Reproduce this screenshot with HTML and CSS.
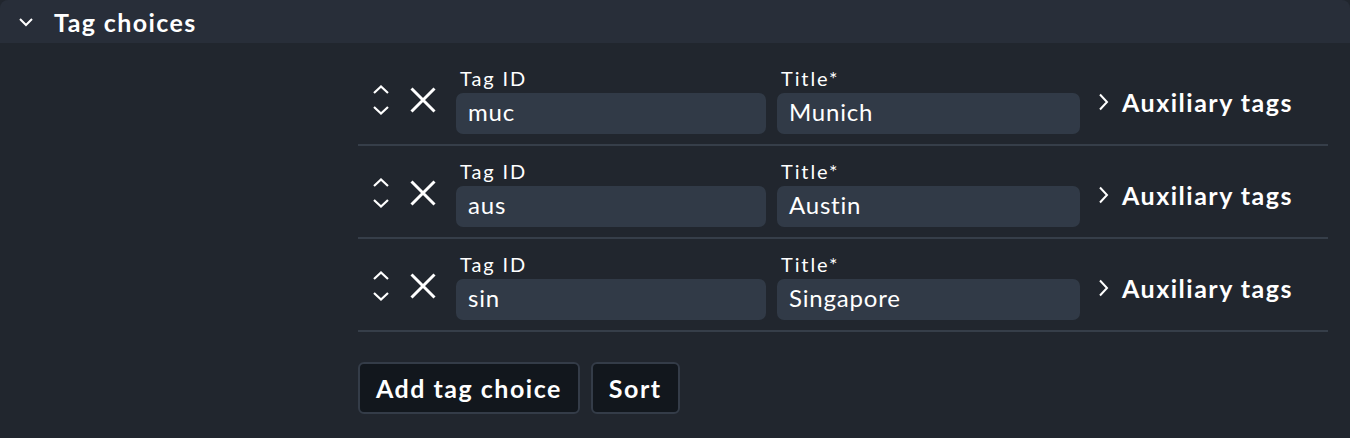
FILE: index.html
```html
<!DOCTYPE html>
<html lang="en">
<head>
    <meta charset="UTF-8">
    <title>Tag choices</title>
    <link rel="stylesheet" href="styles.css">
</head>
<body>
    <div class="section">
        <div class="section-head">
            <svg class="fold" width="16" height="10" viewBox="0 0 16 10"><path d="M2 2 L8 8 L14 2" fill="none" stroke="#fff" stroke-width="2"/></svg>
            <span>Tag choices</span>
        </div>

        <div class="section-body">
            <div class="choices">
                <div class="choice">
                    <div class="controls">
                        <svg class="move" width="18" height="30" viewBox="0 0 18 30"><path d="M2 8 L9 1.5 L16 8 M2 22 L9 28.5 L16 22" fill="none" stroke="#fff" stroke-width="2.2"/></svg>
                        <svg class="del" width="26" height="26" viewBox="0 0 26 26"><path d="M1.5 1.5 L24.5 24.5 M24.5 1.5 L1.5 24.5" fill="none" stroke="#fff" stroke-width="3"/></svg>
                    </div>
                    <div class="field id-field">
                        <label>Tag ID</label>
                        <div class="input">muc</div>
                    </div>
                    <div class="field title-field">
                        <label>Title*</label>
                        <div class="input">Munich</div>
                    </div>
                    <div class="aux">
                        <svg width="12" height="18" viewBox="0 0 12 18"><path d="M2 1.5 L9 9 L2 16.5" fill="none" stroke="#fff" stroke-width="2"/></svg>
                        <span>Auxiliary tags</span>
                    </div>
                </div>

                <div class="choice">
                    <div class="controls">
                        <svg class="move" width="18" height="30" viewBox="0 0 18 30"><path d="M2 8 L9 1.5 L16 8 M2 22 L9 28.5 L16 22" fill="none" stroke="#fff" stroke-width="2.2"/></svg>
                        <svg class="del" width="26" height="26" viewBox="0 0 26 26"><path d="M1.5 1.5 L24.5 24.5 M24.5 1.5 L1.5 24.5" fill="none" stroke="#fff" stroke-width="3"/></svg>
                    </div>
                    <div class="field id-field">
                        <label>Tag ID</label>
                        <div class="input">aus</div>
                    </div>
                    <div class="field title-field">
                        <label>Title*</label>
                        <div class="input">Austin</div>
                    </div>
                    <div class="aux">
                        <svg width="12" height="18" viewBox="0 0 12 18"><path d="M2 1.5 L9 9 L2 16.5" fill="none" stroke="#fff" stroke-width="2"/></svg>
                        <span>Auxiliary tags</span>
                    </div>
                </div>

                <div class="choice">
                    <div class="controls">
                        <svg class="move" width="18" height="30" viewBox="0 0 18 30"><path d="M2 8 L9 1.5 L16 8 M2 22 L9 28.5 L16 22" fill="none" stroke="#fff" stroke-width="2.2"/></svg>
                        <svg class="del" width="26" height="26" viewBox="0 0 26 26"><path d="M1.5 1.5 L24.5 24.5 M24.5 1.5 L1.5 24.5" fill="none" stroke="#fff" stroke-width="3"/></svg>
                    </div>
                    <div class="field id-field">
                        <label>Tag ID</label>
                        <div class="input">sin</div>
                    </div>
                    <div class="field title-field">
                        <label>Title*</label>
                        <div class="input">Singapore</div>
                    </div>
                    <div class="aux">
                        <svg width="12" height="18" viewBox="0 0 12 18"><path d="M2 1.5 L9 9 L2 16.5" fill="none" stroke="#fff" stroke-width="2"/></svg>
                        <span>Auxiliary tags</span>
                    </div>
                </div>
            </div>

            <div class="buttons">
                <button>Add tag choice</button>
                <button>Sort</button>
            </div>
        </div>
    </div>
</body>
</html>
```

FILE: styles.css
```css
body {
    margin: 0;
    background-color: #21262e;
    font-family: Lato, "Open Sans", sans-serif;
    color: #fff;
}

.section-head {
    display: flex;
    align-items: center;
    height: 43px;
    padding-left: 18px;
    background-color: #282e39;
    border-radius: 8px 8px 0 0;
    font-size: 25px;
    font-weight: bold;
    letter-spacing: 1.4px;
}

.section-head .fold {
    margin-right: 20px;
    margin-top: 1px;
}

.section-body {
    padding: 10px 0 0 358px;
}

.choices {
    width: 970px;
}

.choice {
    display: flex;
    align-items: flex-start;
    height: 91px;
    border-bottom: 2px solid #363e49;
}

.controls {
    display: flex;
    align-items: center;
    width: 98px;
    padding-top: 32px;
}

.controls .move {
    margin-left: 14px;
}

.controls .del {
    margin-left: 20px;
}

.field {
    display: flex;
    flex-direction: column;
    padding-top: 13px;
}

.field label {
    font-size: 20px;
    letter-spacing: 1.9px;
    line-height: 24px;
    padding-left: 4px;
    margin-bottom: 3px;
}

.input {
    height: 41px;
    line-height: 38px;
    padding: 0 12px;
    box-sizing: border-box;
    background-color: #313a47;
    border-radius: 7px;
    font-size: 24px;
    letter-spacing: 0.8px;
}

.id-field {
    width: 310px;
    margin-right: 11px;
}

.title-field {
    width: 303px;
    margin-right: 18px;
}

.aux {
    display: flex;
    align-items: center;
    gap: 12px;
    height: 30px;
    margin-top: 34px;
    font-size: 25px;
    font-weight: bold;
    letter-spacing: 1.5px;
}

.buttons {
    display: flex;
    gap: 11px;
    padding-top: 30px;
}

button {
    height: 52px;
    padding: 0 16px;
    background-color: #12171d;
    color: #fff;
    border: 2px solid #343c48;
    border-radius: 6px;
    font-family: Lato, "Open Sans", sans-serif;
    font-size: 25px;
    font-weight: bold;
    letter-spacing: 1.5px;
}
```
